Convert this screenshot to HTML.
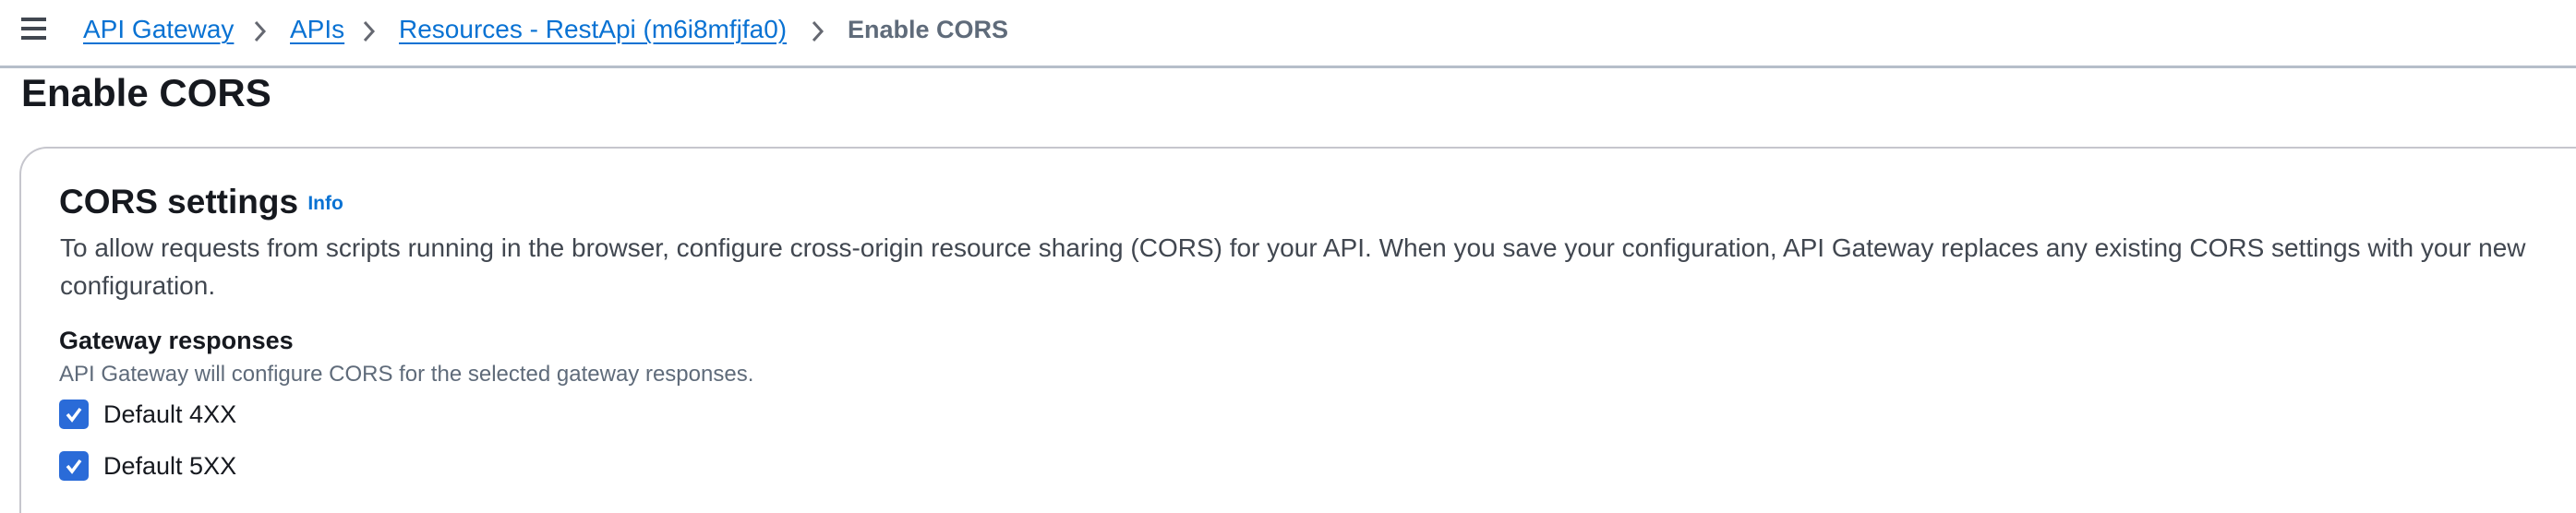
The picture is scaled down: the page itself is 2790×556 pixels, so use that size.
<!DOCTYPE html>
<html style="width:2790px;height:556px;overflow:hidden"><head><meta charset="utf-8"><style>
*{margin:0;padding:0;box-sizing:border-box}
body{width:2790px;height:556px;overflow:hidden;background:#fff;font-family:"Liberation Sans",sans-serif;position:relative;color:#16191f}
.a{position:absolute;white-space:nowrap}
.bc{font-size:28px;top:16px;line-height:32px}
.lk{color:#0972d3;text-decoration:underline;text-decoration-thickness:2px;text-underline-offset:5px}
.chev{position:absolute;top:22px}
.ham{position:absolute;left:23px;width:27px;height:4px;background:#414750}
.cb{position:absolute;left:64px;width:32px;height:32px;background:#2a6bd8;border-radius:5px}
</style></head><body>
<div class="ham" style="top:19px"></div><div class="ham" style="top:29px"></div><div class="ham" style="top:39px"></div>
<div class="a bc lk" style="left:90px">API Gateway</div>
<svg class="chev" style="left:272px" width="20" height="24" viewBox="0 0 20 24"><path d="M5 2 L14 12 L5 22" fill="none" stroke="#656871" stroke-width="3"/></svg>
<div class="a bc lk" style="left:314px">APIs</div>
<svg class="chev" style="left:390px" width="20" height="24" viewBox="0 0 20 24"><path d="M5 2 L14 12 L5 22" fill="none" stroke="#656871" stroke-width="3"/></svg>
<div class="a bc lk" style="left:432px">Resources - RestApi (m6i8mfjfa0)</div>
<svg class="chev" style="left:876px" width="20" height="24" viewBox="0 0 20 24"><path d="M5 2 L14 12 L5 22" fill="none" stroke="#656871" stroke-width="3"/></svg>
<div class="a bc" style="left:918px;color:#5f6b7a;font-weight:bold;font-size:27px">Enable CORS</div>
<div class="a" style="left:0;top:71px;width:2790px;height:3px;background:#b6bec9"></div>
<div class="a" style="left:23px;top:75px;font-size:42px;font-weight:bold;line-height:52px">Enable CORS</div>
<div class="a" style="left:21px;top:159px;width:2769px;height:397px;border-top:2px solid #c6c6cd;border-left:2px solid #c6c6cd;border-top-left-radius:30px"></div>
<div class="a" style="left:64px;top:195px;font-size:37px;font-weight:bold;line-height:48px">CORS settings <span style="font-size:21px;color:#0972d3;vertical-align:middle">Info</span></div>
<div class="a" style="left:65px;top:248px;font-size:28px;line-height:41px;color:#414750">To allow requests from scripts running in the browser, configure cross-origin resource sharing (CORS) for your API. When you save your configuration, API Gateway replaces any existing CORS settings with your new<br>configuration.</div>
<div class="a" style="left:64px;top:352px;font-size:27px;font-weight:bold;line-height:34px">Gateway responses</div>
<div class="a" style="left:64px;top:392px;font-size:24px;line-height:28px;color:#5f6b7a">API Gateway will configure CORS for the selected gateway responses.</div>
<div class="cb" style="top:433px"><svg width="32" height="32" viewBox="0 0 32 32"><path d="M9 16 L14 22 L23 10" fill="none" stroke="#fff" stroke-width="3.5"/></svg></div>
<div class="a" style="left:112px;top:432px;font-size:27px;line-height:34px">Default 4XX</div>
<div class="cb" style="top:489px"><svg width="32" height="32" viewBox="0 0 32 32"><path d="M9 16 L14 22 L23 10" fill="none" stroke="#fff" stroke-width="3.5"/></svg></div>
<div class="a" style="left:112px;top:488px;font-size:27px;line-height:34px">Default 5XX</div>
</body></html>
